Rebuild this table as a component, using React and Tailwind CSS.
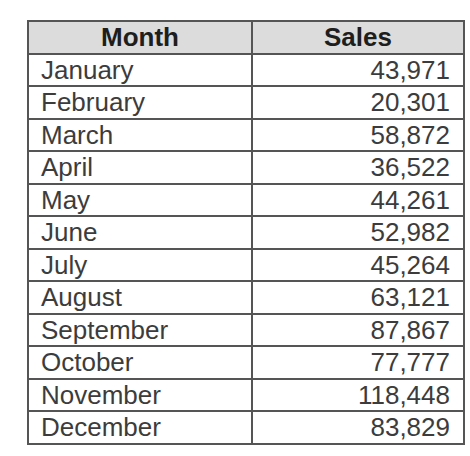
const rows = [
  ["January", "43,971"],
  ["February", "20,301"],
  ["March", "58,872"],
  ["April", "36,522"],
  ["May", "44,261"],
  ["June", "52,982"],
  ["July", "45,264"],
  ["August", "63,121"],
  ["September", "87,867"],
  ["October", "77,777"],
  ["November", "118,448"],
  ["December", "83,829"],
];

export default function App() {
  return (
    <div
      className="w-[470px] h-[456px] bg-white pt-[20px] pl-[27px]"
      style={{ fontFamily: '"Liberation Sans", Arial, sans-serif' }}
    >
      <div className="w-[438px] border-2 border-[#555555] text-[26px] leading-none">
        <div className="flex h-[30.5px] bg-[#dcdcdc] font-bold text-[#1e1e1e]">
          <div className="w-[224px] border-r-2 border-[#555555] flex items-center justify-center">
            Month
          </div>
          <div className="flex-1 flex items-center justify-center">Sales</div>
        </div>
        {rows.map(([m, s]) => (
          <div
            key={m}
            className="flex h-[32.5px] border-t-2 border-[#555555] text-[#3c3c3c]"
          >
            <div className="w-[224px] border-r-2 border-[#555555] flex items-center pl-[12px]">
              {m}
            </div>
            <div className="flex-1 flex items-center justify-end pr-[13px]">{s}</div>
          </div>
        ))}
      </div>
    </div>
  );
}
